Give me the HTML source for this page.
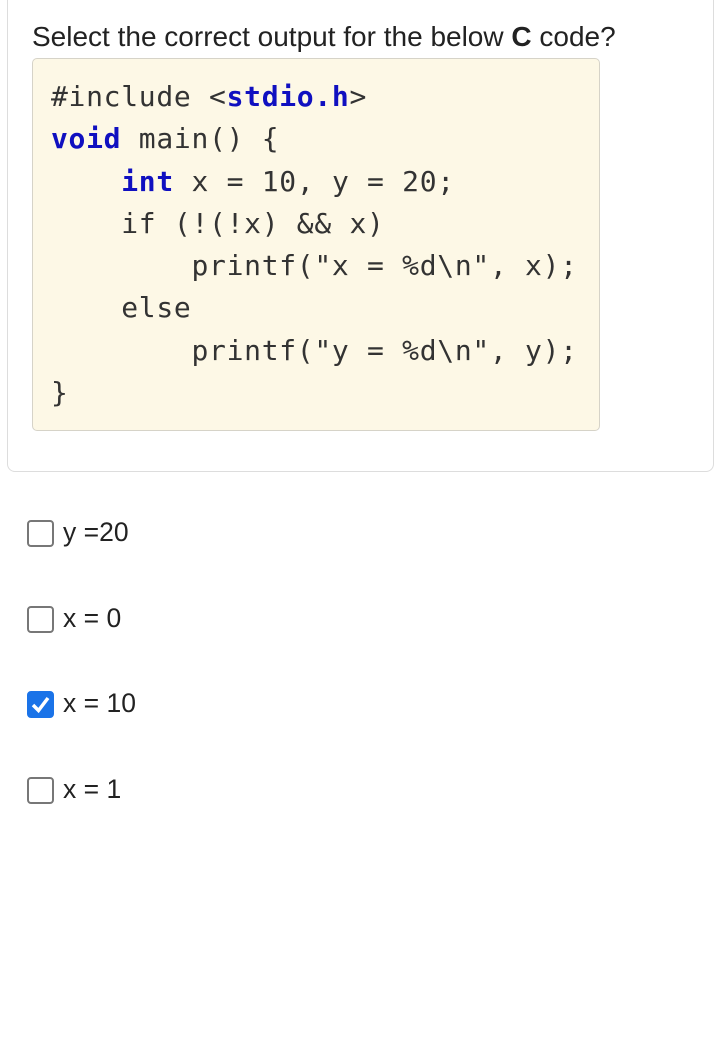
<!DOCTYPE html>
<html><head><style>
body{margin:0;width:720px;height:1064px;background:#fff;font-family:"Liberation Sans",sans-serif;color:#222;position:relative;overflow:hidden}
.card{position:absolute;left:7px;top:-10px;width:705px;height:480px;border:1px solid #ddd;border-radius:8px}
.title{position:absolute;left:32px;top:21px;font-size:28px;color:#222}
.code{position:absolute;left:32px;top:58px;width:566px;height:371px;background:#fdf8e6;border:1px solid #d6d3c8;border-radius:5px}
pre{margin:0;position:absolute;left:18px;top:17px;font-family:"DejaVu Sans Mono","Liberation Mono",monospace;font-size:28px;line-height:42.3px;color:#333;letter-spacing:0.7px}
b.k{color:#1010c0;font-weight:bold}
.cb{position:absolute;left:27px;width:23px;height:23px;border:2px solid #777;border-radius:4px;box-sizing:content-box}
.cb.on{background:#1a73e8;border-color:#1a73e8}
.lbl{position:absolute;left:63px;font-size:26.5px;color:#222}
</style></head><body>
<div class="card"></div>
<div class="title">Select the correct output for the below <b>C</b> code?</div>
<div class="code"><pre>#include &lt;<b class="k">stdio.h</b>&gt;
<b class="k">void</b> main() {
    <b class="k">int</b> x = 10, y = 20;
    if (!(!x) &amp;&amp; x)
        printf("x = %d\n", x);
    else
        printf("y = %d\n", y);
}</pre></div>
<div class="cb" style="top:520px"></div><div class="lbl" style="top:517px">y =20</div>
<div class="cb" style="top:606px"></div><div class="lbl" style="top:603px">x = 0</div>
<div class="cb on" style="top:691px"><svg width="23" height="23" viewBox="0 0 23 23"><path d="M4 12 L9.5 17.5 L19 5" fill="none" stroke="#fff" stroke-width="3.5"/></svg></div><div class="lbl" style="top:688px">x = 10</div>
<div class="cb" style="top:777px"></div><div class="lbl" style="top:774px">x = 1</div>
</body></html>
